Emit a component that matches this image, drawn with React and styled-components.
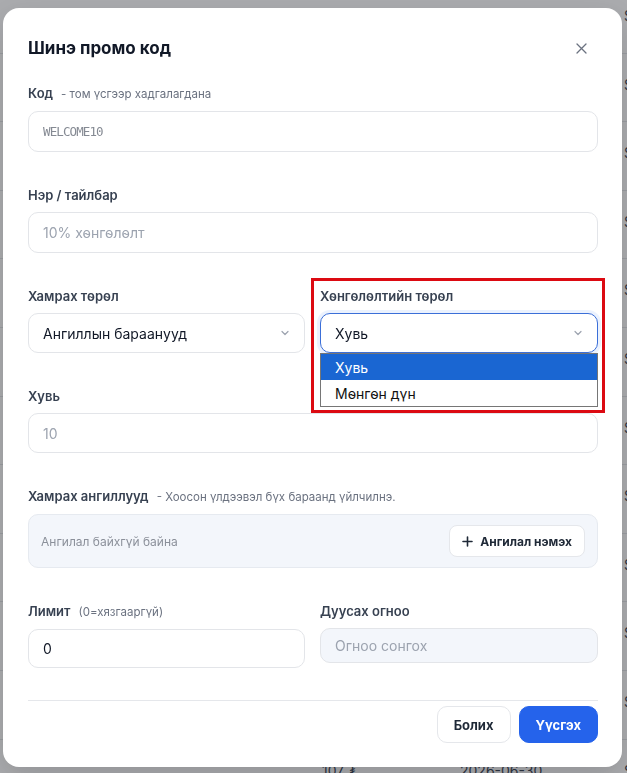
import React from 'react';
import styled, { createGlobalStyle } from 'styled-components';

const Global = createGlobalStyle`
  html, body {
    margin: 0;
    padding: 0;
    background: #ffffff;
    font-family: Inter, "Noto Sans", sans-serif;
    overflow: hidden;
  }
  * { box-sizing: border-box; }
`;

const Backdrop = styled.div`
  width: 627px;
  height: 773px;
  overflow: hidden;
`;

const BgTable = styled.div`
  margin-top: -15px;
`;

const BgRow = styled.div`
  height: 68.6px;
  border-bottom: 1px solid #e3e5e9;
  display: flex;
  align-items: flex-start;
  font-size: 14px;
  color: #374151;
  padding-top: 22px;
`;

const BgCell = styled.span`
  width: ${p => p.w}px;
  flex: none;
`;

const Overlay = styled.div`
  position: fixed;
  inset: 0;
  background: rgba(35, 38, 44, 0.38);
  padding: 8px 0 0 3px;
`;

const Modal = styled.div`
  width: 619px;
  height: 759px;
  background: #fff;
  border-radius: 16px;
  padding: 28px 24px 24px 25px;
  display: flex;
  flex-direction: column;
  box-shadow: 0 10px 30px rgba(0,0,0,0.15);
`;

const Header = styled.div`
  display: flex;
  align-items: center;
  justify-content: space-between;
  height: 24px;
  margin-bottom: 24px;
`;

const Title = styled.h2`
  margin: 0;
  font-size: 17px;
  font-weight: 700;
  color: #111827;
`;

const Close = styled.button`
  border: none;
  background: none;
  padding: 0;
  margin-right: 11px;
  color: #6b7280;
  display: flex;
  cursor: pointer;
`;

const Form = styled.div`
  display: flex;
  flex-direction: column;
  gap: 34px;
  flex: 1;
`;

const Row = styled.div`
  display: grid;
  grid-template-columns: 277px 278px;
  gap: 15px;
`;

const Field = styled.div`
  position: relative;
  display: flex;
  flex-direction: column;
  gap: 8px;
`;

const Label = styled.label`
  font-size: 13px;
  font-weight: 600;
  color: #374151;
  line-height: 18px;
  display: flex;
  align-items: baseline;
`;

const Hint = styled.span`
  font-size: 11.5px;
  font-weight: 400;
  color: #6b7280;
  margin-left: 8px;
`;

const Input = styled.div`
  height: ${p => p.h || 41}px;
  border: 1px solid ${p => (p.focus ? '#3b6fd8' : '#e3e5e9')};
  box-shadow: ${p => (p.focus ? '0 0 0 3px rgba(59,130,246,0.10)' : 'none')};
  border-radius: 10px;
  background: ${p => (p.muted ? '#f3f6fb' : '#fff')};
  padding: 0 14px;
  display: flex;
  align-items: center;
  justify-content: space-between;
  font-size: 14px;
  color: ${p => (p.placeholder ? '#9ca3af' : '#111827')};
  font-family: ${p => (p.mono ? '"DejaVu Sans Mono", monospace' : 'inherit')};
  ${p => p.mono && 'font-size: 12.5px; color: #858a93; letter-spacing: -0.9px;'}
`;

const Chevron = () => (
  <svg width="10" height="10" viewBox="0 0 10 10" fill="none" stroke="#9ca3af" strokeWidth="1.2" strokeLinecap="round" strokeLinejoin="round">
    <path d="M2 3.5 L5 6.5 L8 3.5" />
  </svg>
);

const SelectWrap = styled.div`
  position: relative;
`;

const List = styled.ul`
  position: absolute;
  left: 0;
  right: 0;
  top: 100%;
  margin: 0;
  padding: 0;
  list-style: none;
  background: #fff;
  border: 1px solid #767676;
  z-index: 2;
`;

const Option = styled.li`
  height: 26px;
  padding: 0 14px;
  display: flex;
  align-items: center;
  font-size: 14px;
  background: ${p => (p.active ? '#1a66d2' : '#fff')};
  color: ${p => (p.active ? '#fff' : '#111')};
`;

const Highlight = styled.div`
  position: absolute;
  left: -9px;
  right: -7px;
  top: -9px;
  height: 135px;
  border: 3px solid #dc0a12;
  pointer-events: none;
  z-index: 3;
`;

const CatBox = styled.div`
  height: 54px;
  background: #f3f6fb;
  border: 1px solid #e6eaf0;
  border-radius: 10px;
  display: flex;
  align-items: center;
  justify-content: space-between;
  padding: 0 12px 0 12px;
`;

const Empty = styled.span`
  font-size: 12px;
  color: #8b909a;
`;

const AddButton = styled.button`
  height: 32px;
  padding: 0 12px;
  border: 1px solid #e5e7eb;
  border-radius: 8px;
  background: #fff;
  display: flex;
  align-items: center;
  gap: 7px;
  font-family: inherit;
  font-size: 12px;
  font-weight: 700;
  color: #1f2937;
`;

const Footer = styled.div`
  border-top: 1px solid #e5e7eb;
  padding-top: 5px;
  display: flex;
  justify-content: flex-end;
  gap: 8px;
`;

const Btn = styled.button`
  height: 37px;
  padding: 0 16px;
  border-radius: 10px;
  font-family: inherit;
  font-size: 13px;
  font-weight: 700;
  border: 1px solid ${p => (p.primary ? '#2563eb' : '#e5e7eb')};
  background: ${p => (p.primary ? '#2563eb' : '#fff')};
  color: ${p => (p.primary ? '#fff' : '#1f2937')};
`;

const bgRows = Array.from({ length: 12 });

export default function App() {
  return (
    <>
      <Global />
      <Backdrop>
        <BgTable>
          {bgRows.map((_, i) => (
            <BgRow key={i}>
              <BgCell w={322} />
              <BgCell w={138}>107 ₮</BgCell>
              <BgCell w={164}>2026-06-30</BgCell>
              <BgCell w={40}>Sale</BgCell>
            </BgRow>
          ))}
        </BgTable>
      </Backdrop>
      <Overlay>
        <Modal>
          <Header>
            <Title>Шинэ промо код</Title>
            <Close aria-label="close">
              <svg width="11" height="11" viewBox="0 0 11 11" stroke="currentColor" strokeWidth="1.3" strokeLinecap="round">
                <path d="M1 1 L10 10 M10 1 L1 10" />
              </svg>
            </Close>
          </Header>
          <Form>
            <Field>
              <Label>Код<Hint>- том үсгээр хадгалагдана</Hint></Label>
              <Input mono placeholder>WELCOME10</Input>
            </Field>
            <Field>
              <Label>Нэр / тайлбар</Label>
              <Input placeholder>10% хөнгөлөлт</Input>
            </Field>
            <Row>
              <Field>
                <Label>Хамрах төрөл</Label>
                <Input h={40}>Ангиллын бараанууд<Chevron /></Input>
              </Field>
              <Field>
                <Highlight />
                <Label>Хөнгөлөлтийн төрөл</Label>
                <SelectWrap>
                  <Input h={40} focus>Хувь<Chevron /></Input>
                  <List>
                    <Option active>Хувь</Option>
                    <Option>Мөнгөн дүн</Option>
                  </List>
                </SelectWrap>
              </Field>
            </Row>
            <Field>
              <Label>Хувь</Label>
              <Input h={40} placeholder>10</Input>
            </Field>
            <Field>
              <Label>Хамрах ангиллууд<Hint>- Хоосон үлдээвэл бүх бараанд үйлчилнэ.</Hint></Label>
              <CatBox>
                <Empty>Ангилал байхгүй байна</Empty>
                <AddButton>
                  <svg width="11" height="11" viewBox="0 0 11 11" stroke="#1f2937" strokeWidth="1.6" strokeLinecap="round">
                    <path d="M5.5 1 V10 M1 5.5 H10" />
                  </svg>
                  Ангилал нэмэх
                </AddButton>
              </CatBox>
            </Field>
            <Row>
              <Field>
                <Label>Лимит<Hint>(0=хязгааргүй)</Hint></Label>
                <Input h={39}>0</Input>
              </Field>
              <Field>
                <Label>Дуусах огноо</Label>
                <Input h={35} muted placeholder>Огноо сонгох</Input>
              </Field>
            </Row>
          </Form>
          <Footer>
            <Btn>Болих</Btn>
            <Btn primary>Үүсгэх</Btn>
          </Footer>
        </Modal>
      </Overlay>
    </>
  );
}
